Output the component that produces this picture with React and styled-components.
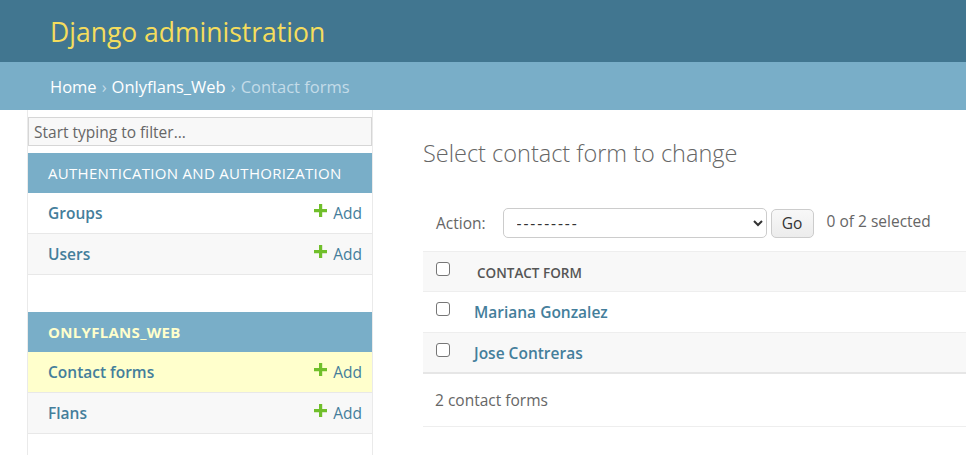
import React from "react";
import styled, { createGlobalStyle } from "styled-components";

const Global = createGlobalStyle`
  html, body { margin: 0; padding: 0; background: #fff; }
  body { font-family: "Open Sans", "Noto Sans", sans-serif; color: #333; }
  * { box-sizing: border-box; }
`;

const Header = styled.header`
  height: 62px;
  background: #417690;
  display: flex;
  align-items: center;
  padding: 0 50px;
`;

const Brand = styled.h1`
  margin: 0;
  font-size: 26.5px;
  font-weight: 400;
  color: #f5dd5d;
  line-height: 1;
  padding-top: 2px;
`;

const Crumbs = styled.nav`
  height: 48px;
  background: #79aec8;
  display: flex;
  align-items: center;
  padding: 0 50px;
  font-size: 16.5px;
  color: #c4dce8;
`;

const Crumb = styled.a`
  color: #fff;
  text-decoration: none;
`;

const Sep = styled.span`
  margin: 0 5px;
  color: #c4dce8;
`;

const Main = styled.div`
  display: flex;
  min-height: calc(100vh - 110px);
`;

const Toggle = styled.div`
  width: 28px;
  flex: none;
  border-right: 1px solid #eaeaea;
`;

const Sidebar = styled.aside`
  width: 345px;
  flex: none;
  border-right: 1px solid #eaeaea;
  padding-top: 7px;
`;

const Filter = styled.input`
  display: block;
  width: 100%;
  height: 29px;
  margin: 0 0 7px;
  padding: 0 5px;
  border: 1px solid #d6d6d6;
  background: #f8f8f8;
  font-family: inherit;
  font-size: 15.5px;
  color: #333;
  &::placeholder { color: #666; }
`;

const Module = styled.div`
  margin-bottom: ${(p) => (p.$last ? 0 : 37)}px;
`;

const Caption = styled.div`
  height: 40px;
  display: flex;
  align-items: center;
  padding: 0 20px;
  background: #79aec8;
  color: ${(p) => (p.$current ? "#ffffcc" : "#fff")};
  font-weight: ${(p) => (p.$current ? 700 : 400)};
  font-size: 15px;
  letter-spacing: 0.3px;
  text-transform: uppercase;
`;

const ModelRow = styled.div`
  height: 41px;
  display: flex;
  align-items: center;
  justify-content: space-between;
  padding: 0 10px 0 20px;
  border-bottom: 1px solid #e8e8e8;
  background: ${(p) => p.$bg};
`;

const ModelName = styled.a`
  font-weight: 600;
  font-size: 15.5px;
  color: #447e9b;
  text-decoration: none;
`;

const AddLink = styled.a`
  display: flex;
  align-items: center;
  gap: 6px;
  font-size: 15.5px;
  color: #447e9b;
  text-decoration: none;
  svg { margin-top: -5px; }
`;

const Content = styled.main`
  flex: 1;
  min-width: 0;
  padding: 27px 0 0 50px;
`;

const Title = styled.h1`
  margin: 0 0 32px;
  font-size: 23.5px;
  font-weight: 300;
  color: #666;
  line-height: 32px;
`;

const Actions = styled.div`
  display: flex;
  align-items: center;
  padding: 0 12px 0 13px;
  height: 44px;
  margin-bottom: 6px;
  color: #666;
  font-size: 15.5px;
`;

const Label = styled.label`
  margin-right: 17px;
  color: #666;
`;

const Select = styled.select`
  width: 264px;
  height: 30px;
  border: 1px solid #ccc;
  border-radius: 5px;
  padding: 0 9px;
  background: #fff;
  font-family: inherit;
  font-size: 15.5px;
  letter-spacing: 1.9px;
  color: #333;
`;

const GoButton = styled.button`
  height: 29px;
  width: 43px;
  margin-left: 4px;
  border: 1px solid #ccc;
  border-radius: 5px;
  background: linear-gradient(#f8f8f8, #ececec);
  font-family: inherit;
  font-size: 15.5px;
  color: #333;
  padding: 0;
`;

const Counter = styled.span`
  margin-left: 13px;
  margin-top: -4px;
  color: #666;
`;

const Table = styled.div`
  width: 100%;
`;

const HeadRow = styled.div`
  height: 41px;
  display: flex;
  align-items: center;
  padding-left: 13px;
  background: #f8f8f8;
  border-top: 1px solid #eee;
  border-bottom: 1px solid #eee;
`;

const HeadLabel = styled.span`
  margin-left: 27px;
  font-size: 13.5px;
  font-weight: 600;
  color: #555;
  text-transform: uppercase;
  margin-top: 2px;
`;

const Row = styled.div`
  height: 41px;
  display: flex;
  align-items: center;
  padding-left: 13px;
  background: ${(p) => p.$bg};
  border-bottom: ${(p) => (p.$last ? "2px solid #e6e6e6" : "1px solid #eee")};
`;

const RowLink = styled.a`
  margin-left: 24px;
  font-size: 15.5px;
  font-weight: 600;
  color: #447e9b;
  text-decoration: none;
`;

const Check = styled.input`
  appearance: none;
  margin: 0;
  width: 14px;
  height: 14px;
  border: 1px solid #767676;
  border-radius: 3px;
  background: #fff;
  position: relative;
  top: -3px;
`;

const Paginator = styled.div`
  height: 53px;
  display: flex;
  align-items: center;
  padding-left: 12px;
  border-bottom: 1px solid #eee;
  color: #666;
  font-size: 15.5px;
`;

const Plus = () => (
  <svg width="13" height="13" viewBox="0 0 13 13" aria-hidden="true">
    <path d="M5 0h3.2v5H13v3.2H8.2V13H5V8.2H0V5h5z" fill="#70bf2b" />
  </svg>
);

const apps = [
  {
    name: "Authentication and Authorization",
    models: ["Groups", "Users"],
  },
  {
    name: "Onlyflans_Web",
    current: true,
    models: ["Contact forms", "Flans"],
  },
];

export default function App() {
  return (
    <>
      <Global />
      <Header>
        <Brand>Django administration</Brand>
      </Header>
      <Crumbs>
        <Crumb href="#">Home</Crumb>
        <Sep>›</Sep>
        <Crumb href="#">Onlyflans_Web</Crumb>
        <Sep>›</Sep>
        <span>Contact forms</span>
      </Crumbs>
      <Main>
        <Toggle />
        <Sidebar>
          <Filter placeholder="Start typing to filter..." />
          {apps.map((app, ai) => (
            <Module key={app.name} $last={ai === apps.length - 1}>
              <Caption $current={app.current}>{app.name}</Caption>
              {app.models.map((m, i) => {
                const currentModel = app.current && i === 0;
                const bg = currentModel ? "#ffffcc" : i % 2 ? "#f8f8f8" : "#fff";
                return (
                  <ModelRow key={m} $bg={bg}>
                    <ModelName href="#">{m}</ModelName>
                    <AddLink href="#">
                      <Plus />
                      Add
                    </AddLink>
                  </ModelRow>
                );
              })}
            </Module>
          ))}
        </Sidebar>
        <Content>
          <Title>Select contact form to change</Title>
          <Actions>
            <Label>Action:</Label>
            <Select defaultValue="">
              <option value="">---------</option>
              <option value="delete">Delete selected contact forms</option>
            </Select>
            <GoButton>Go</GoButton>
            <Counter>0 of 2 selected</Counter>
          </Actions>
          <Table>
            <HeadRow>
              <Check type="checkbox" />
              <HeadLabel>Contact form</HeadLabel>
            </HeadRow>
            {["Mariana Gonzalez", "Jose Contreras"].map((n, i, arr) => (
              <Row key={n} $bg={i % 2 ? "#f8f8f8" : "#fff"} $last={i === arr.length - 1}>
                <Check type="checkbox" />
                <RowLink href="#">{n}</RowLink>
              </Row>
            ))}
          </Table>
          <Paginator>2 contact forms</Paginator>
        </Content>
      </Main>
    </>
  );
}
